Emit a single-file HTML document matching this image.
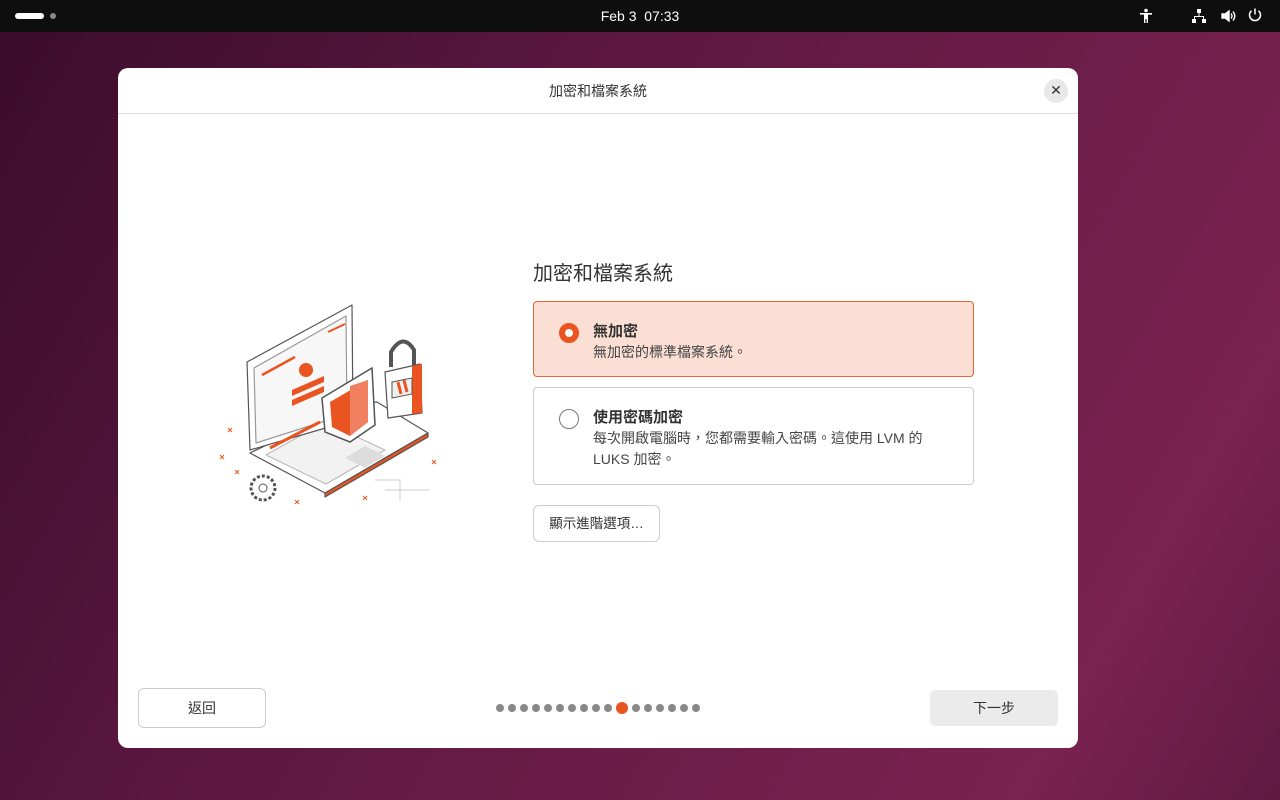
<!DOCTYPE html>
<html><head><meta charset="utf-8"><style>
*{margin:0;padding:0;box-sizing:border-box}
body{width:1280px;height:800px;overflow:hidden;font-family:"Liberation Sans","Noto Sans CJK TC",sans-serif;background:linear-gradient(120deg,#3a0c2a 0%,#5a1740 35%,#6a1d48 60%,#7a2250 85%,#5e1a42 100%);position:relative}
.top{position:absolute;left:0;top:0;width:1280px;height:32px;background:#0e0e0e;color:#fff;font-size:14px}
.dlg{position:absolute;left:118px;top:68px;width:960px;height:680px;background:#fff;border-radius:10px;overflow:hidden}
.hdr{height:46px;border-bottom:1px solid #ddd;text-align:center;line-height:46px;font-size:14px;color:#333}
.close{position:absolute;right:10px;top:11px;width:24px;height:24px;border-radius:50%;background:#e8e8e8;text-align:center;line-height:23px;font-size:14px;color:#333}
.title{position:absolute;left:415px;top:189px;font-size:20px;color:#333}
.opt{position:absolute;left:415px;width:441px;border:1px solid #ccc;border-radius:4px}
.opt b{position:absolute;left:59px;font-size:15px;color:#333}
.opt span{position:absolute;left:59px;font-size:14px;color:#444;line-height:21px;white-space:nowrap}
.radio{position:absolute;left:25px;width:20px;height:20px;border-radius:50%}
.btn{position:absolute;border:1px solid #ccc;border-radius:6px;font-size:14px;color:#333;text-align:center}
.dot{position:absolute;top:636px;width:8px;height:8px;border-radius:50%;background:#888}
</style></head><body>
<div class="top">
<div style="position:absolute;left:15px;top:13px;width:29px;height:6px;border-radius:3px;background:#fff"></div>
<div style="position:absolute;left:50px;top:13px;width:6px;height:6px;border-radius:3px;background:#888"></div>
<div style="position:absolute;left:0;width:1280px;text-align:center;top:8px">Feb 3&nbsp; 07:33</div>
<svg style="position:absolute;left:1138px;top:8px" width="16" height="16" viewBox="0 0 16 16" fill="#fff"><circle cx="8" cy="2.5" r="1.8"/><path d="M2 5h12v1.6H10V15H8.6v-4H7.4v4H6V6.6H2z"/></svg>
<svg style="position:absolute;left:1191px;top:8px" width="16" height="16" viewBox="0 0 16 16" fill="#fff"><rect x="6" y="1" width="4" height="4"/><rect x="1" y="11" width="4" height="4"/><rect x="11" y="11" width="4" height="4"/><path d="M7.5 5h1v3H13v3h-1V9H4v2H3V8h4.5z"/></svg>
<svg style="position:absolute;left:1220px;top:8px" width="16" height="16" viewBox="0 0 16 16" fill="none" stroke="#fff" stroke-width="1.4"><path d="M2 6h3l4-3v10l-4-3H2z" fill="#fff"/><path d="M11 5.5q2 2.5 0 5M13 3.5q3.5 4.5 0 9"/></svg>
<svg style="position:absolute;left:1247px;top:7px" width="16" height="16" viewBox="0 0 16 16" fill="none" stroke="#fff" stroke-width="1.5"><path d="M8 1.5v6"/><path d="M4.5 3.8a5.5 5.5 0 1 0 7 0"/></svg>
</div>
<div class="dlg">
<div class="hdr">加密和檔案系統</div>
<div class="close">✕</div>
<svg style="position:absolute;left:82px;top:222px" width="260" height="220" viewBox="0 0 260 220">
<g stroke="#555" stroke-width="1.2" stroke-linejoin="round">
<path d="M50 163 L125 203 L228 143 L177 112 L150 115 Z" fill="#fff"/>
<path d="M125 203 L125 207 L228 147 L228 143 Z" fill="#e95420"/>
<path d="M66 165 L126 194 L185 160 L125 132 Z" fill="#f2f2f2" stroke="#bbb"/>
<path d="M145 168 L165 178 L185 166 L165 156 Z" fill="#ddd" stroke="none"/>
<path d="M47 72 L152 15 L153 130 L50 160 Z" fill="#fff"/>
<path d="M54 78 L146 26 L147 124 L56 153 Z" fill="#f7f7f7" stroke="#999"/>
</g>
<path d="M62 85 L95 67" stroke="#e95420" stroke-width="2.5"/>
<path d="M128 42 L145 34" stroke="#e95420" stroke-width="2"/>
<circle cx="106" cy="80" r="7" fill="#e95420"/>
<path d="M92 100 L124 86 L124 92 L92 106 Z M92 110 L124 96 L124 102 L92 116 Z" fill="#e95420"/>
<path d="M70 158 L120 132" stroke="#e95420" stroke-width="3"/>
<path d="M122 108 L172 78 L175 135 L150 152 L125 142 Z" fill="#fff" stroke="#555" stroke-width="1.5"/>
<path d="M130 112 L168 90 L168 132 L150 146 L132 137 Z" fill="#e95420"/>
<path d="M150 96 L168 90 L168 132 L150 146 Z" fill="#f08060"/>
<path d="M185 82 L220 74 L222 123 L188 128 Z" fill="#fff" stroke="#555" stroke-width="1.2"/>
<path d="M212 76 L222 74 L222 123 L212 124 Z" fill="#e95420"/>
<path d="M191 77 V62 Q203 42 214 60 V75" fill="none" stroke="#555" stroke-width="4"/>
<path d="M192 92 L212 88 L212 104 L192 108 Z" fill="#eee" stroke="#555"/>
<path d="M198 92 l3 12 M204 90 l3 12" stroke="#e95420" stroke-width="3"/>
<circle cx="63" cy="198" r="12" fill="#fff" stroke="#555" stroke-width="3" stroke-dasharray="3 2"/>
<circle cx="63" cy="198" r="4" fill="#fff" stroke="#555"/>
<g stroke="#e95420" stroke-width="1"><path d="M28 138l4 4m0-4l-4 4M20 165l4 4m0-4l-4 4M35 180l4 4m0-4l-4 4M95 210l4 4m0-4l-4 4M163 206l4 4m0-4l-4 4M232 170l4 4m0-4l-4 4"/></g>
<path d="M175 190 H200 V210 M185 200 H230" stroke="#ccc" fill="none"/>
</svg>
<div class="title">加密和檔案系統</div>
<div class="opt" style="top:233px;height:76px;background:#fbdfd5;border-color:#e8643a">
<div class="radio" style="top:21px;border:6px solid #e95420;background:#fff"></div>
<b style="top:18px">無加密</b><span style="top:40px">無加密的標準檔案系統。</span></div>
<div class="opt" style="top:319px;height:98px">
<div class="radio" style="top:21px;border:1px solid #777"></div>
<b style="top:18px">使用密碼加密</b><span style="top:40px">每次開啟電腦時，您都需要輸入密碼。這使用 LVM 的<br>LUKS 加密。</span></div>
<div class="btn" style="left:415px;top:437px;width:127px;height:37px;line-height:35px;font-size:13.5px">顯示進階選項…</div>
<div class="btn" style="left:20px;top:620px;width:128px;height:40px;line-height:38px">返回</div>
<div class="btn" style="left:812px;top:622px;width:128px;height:36px;line-height:36px;background:#ebebeb;border:none">下一步</div>
<div class="dot" style="left:378px"></div><div class="dot" style="left:390px"></div><div class="dot" style="left:402px"></div><div class="dot" style="left:414px"></div><div class="dot" style="left:426px"></div><div class="dot" style="left:438px"></div><div class="dot" style="left:450px"></div><div class="dot" style="left:462px"></div><div class="dot" style="left:474px"></div><div class="dot" style="left:486px"></div>
<div class="dot" style="left:498px;top:634px;width:12px;height:12px;background:#e95420"></div>
<div class="dot" style="left:514px"></div><div class="dot" style="left:526px"></div><div class="dot" style="left:538px"></div><div class="dot" style="left:550px"></div><div class="dot" style="left:562px"></div><div class="dot" style="left:574px"></div>
</div>
</body></html>
